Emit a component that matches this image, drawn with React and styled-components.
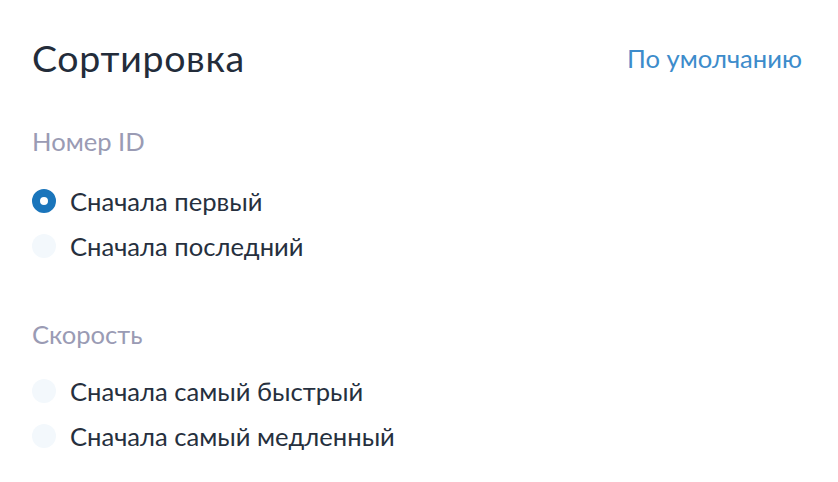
import React, { useState } from 'react';
import styled, { createGlobalStyle } from 'styled-components';

const GlobalStyle = createGlobalStyle`
  html, body {
    margin: 0;
    padding: 0;
    background: #ffffff;
  }
  body {
    font-family: Lato, "Noto Sans", sans-serif;
  }
`;

const Panel = styled.div`
  width: 838px;
  height: 482px;
  box-sizing: border-box;
  padding: 36px 36px 0 32px;
  background: #ffffff;
`;

const Header = styled.div`
  display: flex;
  align-items: center;
  justify-content: space-between;
  height: 44px;
`;

const Title = styled.h1`
  margin: 0;
  font-size: 37.5px;
  letter-spacing: 0.7px;
  line-height: 44px;
  font-weight: 400;
  color: #232c3a;
`;

const ResetLink = styled.a`
  font-size: 25.6px;
  line-height: 44px;
  color: #3d8ccb;
  text-decoration: none;
  cursor: pointer;
`;

const Section = styled.div`
  margin-top: ${(p) => p.gap}px;
`;

const SectionTitle = styled.div`
  font-size: 25.6px;
  line-height: 28px;
  color: #9a9bb4;
  margin-bottom: ${(p) => p.space}px;
`;

const List = styled.div`
  display: flex;
  flex-direction: column;
  gap: 17px;
`;

const Option = styled.label`
  display: flex;
  align-items: center;
  gap: 14px;
  font-size: 25.6px;
  line-height: 28px;
  color: #26303e;
  cursor: pointer;
`;

const Dot = styled.span`
  width: 24px;
  height: 24px;
  border-radius: 50%;
  box-sizing: border-box;
  flex-shrink: 0;
  background: ${(p) => (p.checked ? '#ffffff' : '#f3f8fc')};
  border: ${(p) => (p.checked ? '8px solid #1a75bb' : 'none')};
`;

const groups = [
  { key: 'id', title: 'Номер ID', gap: 47, space: 32, options: ['Сначала первый', 'Сначала последний'] },
  { key: 'speed', title: 'Скорость', gap: 60, space: 29, options: ['Сначала самый быстрый', 'Сначала самый медленный'] },
];

export default function App() {
  const [sort, setSort] = useState('id-0');

  return (
    <>
      <GlobalStyle />
      <Panel>
        <Header>
          <Title>Сортировка</Title>
          <ResetLink onClick={() => setSort('id-0')}>По умолчанию</ResetLink>
        </Header>
        {groups.map((g) => (
          <Section key={g.key} gap={g.gap}>
            <SectionTitle space={g.space}>{g.title}</SectionTitle>
            <List>
              {g.options.map((o, i) => {
                const id = `${g.key}-${i}`;
                return (
                  <Option key={id} onClick={() => setSort(id)}>
                    <Dot checked={sort === id} />
                    {o}
                  </Option>
                );
              })}
            </List>
          </Section>
        ))}
      </Panel>
    </>
  );
}
